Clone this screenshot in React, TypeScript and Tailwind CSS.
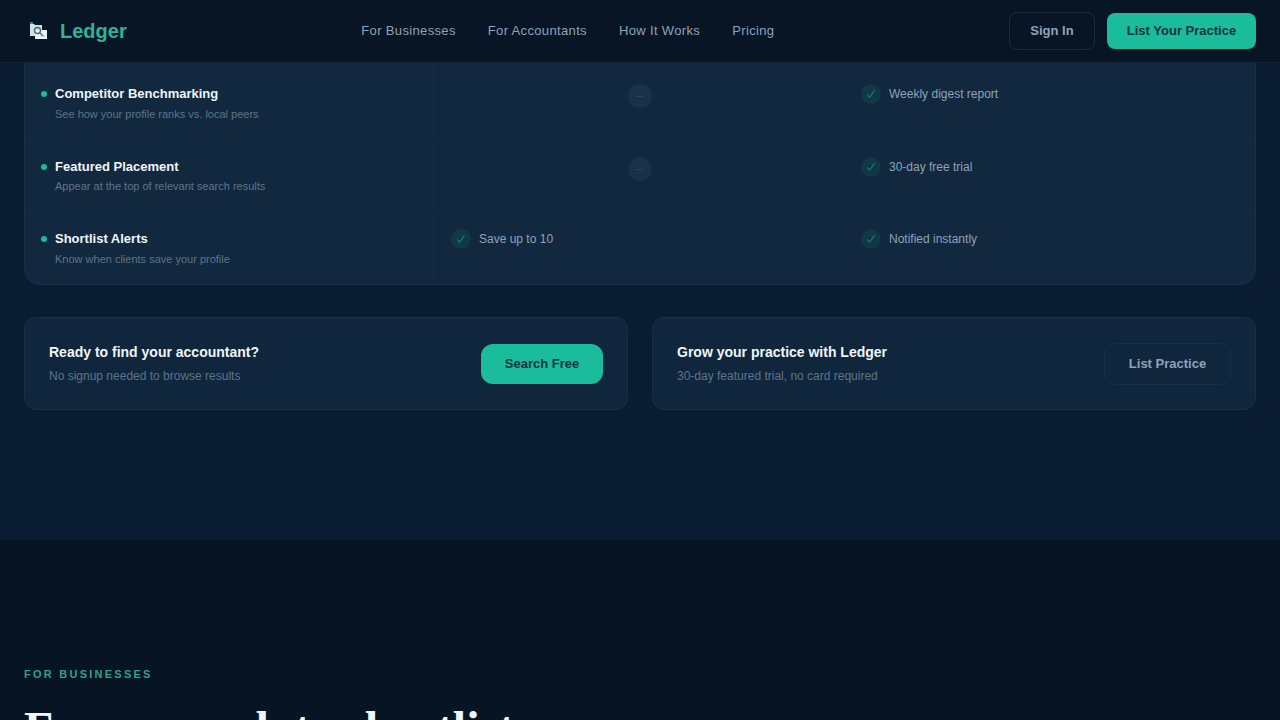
const rows = [
  { title: 'Competitor Benchmarking', sub: 'See how your profile ranks vs. local peers', free: null, pro: 'Weekly digest report', h: 'h-[77px] pt-[20px]', gap: 'mt-px' },
  { title: 'Featured Placement', sub: 'Appear at the top of relevant search results', free: null, pro: '30-day free trial', h: 'h-[71px] pt-[15px]', gap: 'mt-0' },
  { title: 'Shortlist Alerts', sub: 'Know when clients save your profile', free: 'Save up to 10', pro: 'Notified instantly', h: 'h-[70px] pt-[15px]', gap: 'mt-px' },
];

const Logo = () => (
  <svg width="20" height="20" viewBox="0 0 20 20" className="shrink-0 ml-[5px]">
    <path d="M1 1h3v2h-3z" fill="#2f8f86" />
    <path d="M1 3h4l1 1h7v11H1z" fill="#cfe3e6" />
    <path d="M6 9h12v9H6z" fill="#e8f3f4" />
    <circle cx="8.5" cy="9.5" r="3" fill="none" stroke="#4d6b78" strokeWidth="1.4" />
    <path d="M11 12l3 3" stroke="#4d6b78" strokeWidth="1.4" />
    <path d="M12 15h4" stroke="#9fb6bf" strokeWidth="1" />
  </svg>
);

const Yes = ({ text }: { text: string }) => (
  <div className="flex items-center gap-2">
    <span className="w-5 h-5 rounded-full bg-[#0f3a45] flex items-center justify-center">
      <svg width="10" height="10" viewBox="0 0 10 10" fill="none" stroke="#1f9d8c" strokeWidth="0.9">
        <path d="M1.5 5.5L3.6 8.4L8.4 1.4" />
      </svg>
    </span>
    <span className="text-xs text-[#8fa3b8]">{text}</span>
  </div>
);

const No = () => (
  <div className="flex justify-center">
    <span className="w-6 h-6 rounded-full bg-[#1a3149] flex items-center justify-center">
      <span className="w-[7px] h-px bg-[#2a4560]" />
    </span>
  </div>
);

export default function App() {
  return (
    <div className="h-[720px] overflow-hidden bg-[#071423] font-['Liberation_Sans',sans-serif] relative">
      {/* Nav */}
      <nav className="absolute top-0 left-0 right-0 z-20 h-[63px] bg-[#081524] border-b border-[#11233a] flex items-center justify-between px-6">
        <div className="flex items-center gap-[11px]">
          <Logo />
          <span className="text-xl font-bold text-[#2fb39a]">Ledger</span>
        </div>
        <div className="flex items-center gap-8 text-[13px] tracking-[0.35px] text-[#8fa3b8]">
          <span>For Businesses</span>
          <span>For Accountants</span>
          <span>How It Works</span>
          <span>Pricing</span>
        </div>
        <div className="flex items-center gap-3">
          <button className="h-[38px] w-[86px] rounded-lg border border-[#1a2c42] text-[13px] font-bold text-[#8fa3b8]">Sign In</button>
          <button className="h-9 w-[149px] rounded-lg bg-[#1abc9c] text-[13px] font-bold text-[#0f3340]">List Your Practice</button>
        </div>
      </nav>

      {/* Compare section */}
      <section className="h-[540px] bg-[#0a1c32] pt-[40px] px-6">
        <div className="h-[245px] rounded-b-2xl border border-[#1b3048] bg-[#11283f] overflow-hidden pt-[23px]">
          {rows.map((r, i) => (
            <div key={r.title} className={`grid grid-cols-[410px_410px_1fr] ${i > 0 ? 'border-t border-[#142b45]' : ''}`}>
              <div className={`${r.h} pl-4 border-r border-[#142b45]`}>
                <div className="flex items-center gap-2">
                  <span className="w-[6px] h-[6px] rounded-full bg-[#1abc9c]" />
                  <span className="text-[13px] font-bold text-[#f0f6fa]">{r.title}</span>
                </div>
                <p className={`pl-[14px] ${r.gap} text-[11px] leading-[18px] text-[#5f7488]`}>{r.sub}</p>
              </div>
              <div className={`${r.h} px-4 border-r border-[#142b45]`}>
                {r.free ? <Yes text={r.free} /> : <No />}
              </div>
              <div className={`${r.h} px-4`}>
                <Yes text={r.pro} />
              </div>
            </div>
          ))}
        </div>

        {/* CTA cards */}
        <div className="grid grid-cols-2 gap-6 mt-8">
          <div className="h-[93px] rounded-xl border border-[#1b3048] bg-[#0f263d] flex items-center justify-between px-6">
            <div className="pb-[2px]">
              <h3 className="text-sm font-bold text-[#f0f6fa]">Ready to find your accountant?</h3>
              <p className="mt-[6px] text-xs text-[#5f7488]">No signup needed to browse results</p>
            </div>
            <button className="h-10 w-[122px] rounded-xl bg-[#1abc9c] text-[13px] font-bold text-[#0f3340]">Search Free</button>
          </div>
          <div className="h-[93px] rounded-xl border border-[#1b3048] bg-[#0f263d] flex items-center justify-between px-6">
            <div className="pb-[2px]">
              <h3 className="text-sm font-bold text-[#f0f6fa]">Grow your practice with Ledger</h3>
              <p className="mt-[6px] text-xs text-[#5f7488]">30-day featured trial, no card required</p>
            </div>
            <button className="h-[42px] w-[127px] rounded-xl border border-[#1b3048] text-[13px] font-bold text-[#8fa3b8]">List Practice</button>
          </div>
        </div>
      </section>

      {/* For businesses */}
      <section className="pt-[126px] px-6">
        <p className="text-[11px] font-bold tracking-[2.25px] text-[#2fa08c]">FOR BUSINESSES</p>
        <h2 className="mt-[18px] text-[48px] leading-[56px] font-bold font-['Liberation_Serif',serif] text-[#f0f6fa] whitespace-nowrap">From search to shortlist</h2>
      </section>
    </div>
  );
}
